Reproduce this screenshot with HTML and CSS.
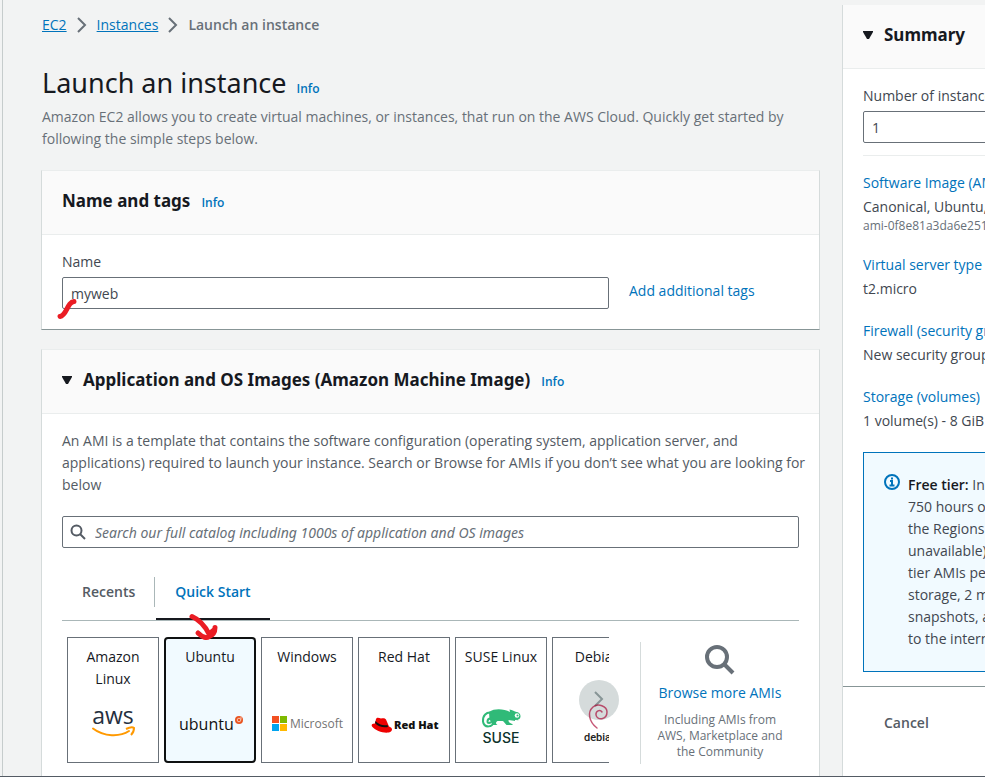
FILE: index.html
```html
<!DOCTYPE html>
<html lang="en">
<head>
<meta charset="utf-8">
<title>Launch an instance</title>
<link rel="stylesheet" href="styles.css">
</head>
<body>
<div class="shell">
  <main class="main">
    <nav class="crumbs" aria-label="Breadcrumbs">
      <a href="#">EC2</a>
      <svg class="chev" viewBox="0 0 10 16"><path d="M1 1l7 7-7 7"/></svg>
      <a href="#">Instances</a>
      <svg class="chev" viewBox="0 0 10 16"><path d="M1 1l7 7-7 7"/></svg>
      <span class="here">Launch an instance</span>
    </nav>
    <div class="title"><h1>Launch an instance</h1><a class="info" href="#">Info</a></div>
    <p class="lead">Amazon EC2 allows you to create virtual machines, or instances, that run on the AWS Cloud. Quickly get started by<br>following the simple steps below.</p>

    <section class="card">
      <header class="card-head"><h2>Name and tags</h2><a class="info" href="#">Info</a></header>
      <div class="card-body">
        <label class="label" for="name">Name</label>
        <div class="name-row">
          <div class="name-field">
            <input class="field" id="name" type="text" value="myweb">
            <svg class="mark-name" viewBox="0 0 22 22"><path d="M4 18.500C11 17.500 11 4 18 3.500"/></svg>
          </div>
          <a class="link" href="#">Add additional tags</a>
        </div>
      </div>
    </section>

    <section class="card card-open">
      <header class="card-head"><svg class="tri" viewBox="0 0 10 8"><path d="M0 0h10v1L6 8H4L0 1z"/></svg><h2>Application and OS Images (Amazon Machine Image)</h2><a class="info" href="#">Info</a></header>
      <div class="card-body">
        <p class="text">An AMI is a template that contains the software configuration (operating system, application server, and<br>applications) required to launch your instance. Search or Browse for AMIs if you don’t see what you are looking for<br>below</p>
        <div class="search">
          <svg class="search-icon" viewBox="0 0 16 16"><circle cx="6.500" cy="6.500" r="5"/><path d="M10 10l5 5"/></svg>
          <input class="field search-field" type="search" aria-label="Search AMIs" placeholder="Search our full catalog including 1000s of application and OS images">
        </div>
        <div class="tabs" role="tablist">
          <button class="tab" role="tab" type="button">Recents</button>
          <button class="tab tab-on" role="tab" type="button" aria-selected="true">Quick Start</button>
          <svg class="mark-tab" viewBox="0 0 32 30"><path d="M4 3.500C12 7 17 13 21 21M10 20C15 25 19 25 20.500 24C26 22 27 19 27 14.500M21 21L26 17"/></svg>
        </div>
        <div class="picker">
          <div class="carousel">
            <button class="next" type="button" aria-label="Next"><svg class="next-icon" viewBox="0 0 10 16"><path d="M1 1l7 7-7 7"/></svg></button>
            <div class="tiles">
              <label class="tile"><input type="radio" name="os"><span>Amazon Linux</span>
                <svg class="logo" viewBox="0 0 90 60"><text class="aws" x="45" y="27" text-anchor="middle">aws</text><path class="smile" d="M25 31.500C36 40 52 40 61 34"/><path class="smile-tip" d="M58 32c4-2 7-2 8-1 0 3-1 5-3 7"/></svg></label>
              <label class="tile tile-on"><input type="radio" name="os" checked><span>Ubuntu</span>
                <svg class="logo" viewBox="0 0 90 60"><text class="ubuntu" x="14" y="33">ubuntu</text><circle cx="74" cy="23" r="4" fill="#e95420"/><circle class="ring" cx="74" cy="23" r="1.800"/><path class="ring" d="M76 19.500v3"/></svg></label>
              <label class="tile"><input type="radio" name="os"><span>Windows</span>
                <svg class="logo" viewBox="0 0 90 60"><path fill="#f25022" d="M10 19h7v7h-7z"/><path fill="#7fba00" d="M18 19h7v7h-7z"/><path fill="#00a4ef" d="M10 27h7v7h-7z"/><path fill="#ffb900" d="M18 27h7v7h-7z"/><text class="ms" x="28" y="31">Microsoft</text></svg></label>
              <label class="tile"><input type="radio" name="os"><span>Red Hat</span>
                <svg class="logo" viewBox="0 0 90 60"><path fill="#e00" d="M17 22c1-2 3-1 5-.500 2-.500 4-.500 5 1l3 7c3 1 4 3 2 5-4 3-15 0-19-5-1-2 0-3 3-3z"/><path d="M16 26c3 4 9 5 13 4l-.500-2c-4 1-9-.500-12-4z"/><text class="rh" x="35" y="32">Red Hat</text></svg></label>
              <label class="tile"><input type="radio" name="os"><span>SUSE Linux</span>
                <svg class="logo" viewBox="0 0 90 60"><path fill="#30ba78" d="M33 15c6-4 15-3 21 0l-.500-2.500c3 .500 5 2 7 2.500 2 0 4 2 4 4 0 3-2 5-5 5l-7-1c0 3 2 3 4 4v1h-6c-2-2-3-4-4-4h-5c-2 1-2 3 0 4h-5c-2-3-2-5-3-5z"/><path class="tail" d="M37 16C30 14 26.500 19 27 24.500c1 7 10.500 6 10.500 0 0-4-6-4-6 0 0 2 3 2 3 0"/><circle cx="61" cy="18.500" r="2.300" fill="#fff"/><circle cx="61.500" cy="18.500" r="1" fill="#30ba78"/><path class="mouth" d="M59 23.500q3 .500 5-1.500"/><text class="suse" x="45" y="46" text-anchor="middle">SUSE</text></svg></label>
              <label class="tile"><input type="radio" name="os"><span>Debian</span>
                <svg class="logo" viewBox="0 0 90 60"><path class="swirl" d="M44 31C36 25 34 15 40 10c5-4 14-1 14 5 0 8-10 9-11 3-.500-4 4-6 6-3"/><text class="deb" x="31" y="44">debian</text></svg></label>
            </div>
          </div>
          <div class="more">
            <svg class="more-icon" viewBox="0 0 30 30"><circle cx="12" cy="12" r="10"/><path d="M19 19l9 9"/></svg>
            <a class="link" href="#">Browse more AMIs</a>
            <p class="hint">Including AMIs from<br>AWS, Marketplace and<br>the Community</p>
          </div>
        </div>
      </div>
    </section>
  </main>

  <aside class="side">
    <div class="side-inner">
      <header class="card-head"><svg class="tri" viewBox="0 0 10 8"><path d="M0 0h10v1L6 8H4L0 1z"/></svg><h2>Summary</h2></header>
      <div class="side-body">
        <label class="label" for="count">Number of instances</label>
        <input class="field" id="count" type="text" value="1">
        <dl class="facts">
          <div><dt><a class="link" href="#">Software Image (AMI)</a></dt><dd>Canonical, Ubuntu,</dd><dd class="small">ami-0f8e81a3da6e2510</dd></div>
          <div><dt><a class="link" href="#">Virtual server type (instance type)</a></dt><dd>t2.micro</dd></div>
          <div><dt><a class="link" href="#">Firewall (security group)</a></dt><dd>New security group</dd></div>
          <div><dt><a class="link" href="#">Storage (volumes)</a></dt><dd>1 volume(s) - 8 GiB</dd></div>
        </dl>
        <div class="tier">
          <svg class="tier-icon" viewBox="0 0 16 16"><circle cx="8" cy="8" r="7"/><path d="M6 7h2v4.500M5.500 11.500h5M7 4.500h2"/></svg>
          <p><b>Free tier:</b> In<br>750 hours of<br>the Regions<br>unavailable)<br>tier AMIs per<br>storage, 2 million<br>snapshots, and<br>to the internet.</p>
        </div>
      </div>
      <footer class="side-foot"><button class="cancel" type="button">Cancel</button></footer>
    </div>
  </aside>
</div>
</body>
</html>
```
FILE: styles.css
```css
* { box-sizing: border-box; }
body {
  margin: 0;
  background: #f2f3f3;
  color: #414750;
  font: 14px/22px "Open Sans", "Noto Sans", sans-serif;
}
h1, h2, p, dl, dd { margin: 0; }
h1 { font: 400 27px/36px "Noto Sans", sans-serif; color: #16191f; }
h2 { font: 700 17px/26px "Noto Sans", sans-serif; color: #16191f; }
button, input { font: inherit; }
svg { flex: none; fill: none; }
a, .link { color: #0073bb; text-decoration: none; }

.shell {
  display: grid;
  grid-template-columns: minmax(0, 1fr) 143px;
  gap: 22px;
  height: 100vh;
  overflow: hidden;
  border-bottom: 1px solid #545b64;
}
.main {
  display: flex;
  flex-direction: column;
  margin-left: 2px;
  padding: 14px 0 0 38px;
  border-left: 1px solid #c6cccc;
}
.crumbs { display: flex; align-items: center; gap: 10px; }
.crumbs a { text-decoration: underline; }
.chev { width: 10px; height: 16px; stroke: #687078; stroke-width: 2; }
.here { color: #687078; font-weight: 600; }
.title { display: flex; align-items: baseline; gap: 10px; margin: 29px 0 5px; }
.info { font-size: 12px; line-height: 16px; font-weight: 600; }
.lead { color: #687078; white-space: nowrap; }
.crumbs, .title, .lead { margin-left: 1px; }

.card {
  margin-top: 20px;
  background: #fff;
  border: 1px solid #d5dbdb;
  border-top-color: #eaeded;
  border-bottom-color: #879596;
}
.card-open { flex: 1; border-bottom: 0; margin-top: 19px; }
.card-head {
  display: flex;
  align-items: baseline;
  gap: 11px;
  height: 64px;
  padding: 17px 20px 0;
  background: #fafafa;
  border-bottom: 1px solid #eaeded;
}
.tri { width: 10px; height: 8px; fill: #16191f; align-self: center; margin-bottom: 20px; }
.card-body { padding: 16px 20px 20px; }
.label { display: block; margin-bottom: 4px; }
.field {
  display: block;
  width: 100%;
  height: 32px;
  padding: 0 8px;
  border: 1px solid #687078;
  border-radius: 2px;
  background: #fff;
  color: #414750;
}
.name-row { display: grid; grid-template-columns: minmax(0, 1fr) 170px; gap: 20px; line-height: 28px; }
.name-field { position: relative; }
.mark-name { position: absolute; left: -6px; top: 21px; width: 22px; height: 22px; stroke: #ea1c24; stroke-width: 5; stroke-linecap: round; }

.text { color: #545b64; white-space: nowrap; }
.search { position: relative; margin-top: 20px; }
.search-icon { position: absolute; left: 8px; top: 8px; width: 16px; height: 16px; stroke: #545b64; stroke-width: 2; }
.search-field { padding-left: 32px; font-family: "Noto Sans", sans-serif; }
.search-field::placeholder { color: #687078; font-style: italic; opacity: 1; }

.tabs { position: relative; display: flex; margin-top: 20px; height: 53px; border-bottom: 1px solid #aab7b8; }
.tab {
  position: relative;
  padding: 0 19px 2px;
  margin-right: 1px;
  border: 0;
  border-bottom: 2px solid transparent;
  background: none;
  color: #545b64;
  font-weight: 600;
}
.tab:first-child { border-right: 1px solid #aab7b8; border-bottom: 0; height: 30px; margin-top: 9px; padding: 0 19px 0 20px; }
.tab-on { color: #0073bb; border-bottom-color: #16191f; }
.mark-tab { position: absolute; left: 126px; top: 45px; width: 32px; height: 30px; stroke: #ea1c24; stroke-width: 5; stroke-linecap: round; stroke-linejoin: round; z-index: 2; }

.picker { display: grid; grid-template-columns: minmax(0, 1fr) 159px; gap: 31px; margin-top: 16px; }
.carousel { position: relative; padding-left: 5px; }
.tiles { position: relative; display: flex; gap: 5px; overflow: hidden; }
.tile {
  flex: none;
  display: flex;
  flex-direction: column;
  justify-content: space-between;
  width: 92px;
  height: 126px;
  padding-top: 8px;
  border: 1px solid #687078;
  color: #16191f;
  text-align: center;
}
.tile span { padding: 0 8px; }
.tile:nth-child(5) span { padding: 0; }
.tile input { position: absolute; opacity: 0; }
.tile-on { background: #f1faff; border: 2px solid #0f1111; border-radius: 4px; padding-top: 7px; }
.logo { display: block; width: 90px; height: 60px; margin-bottom: 5px; }
.tile-on .logo { margin: 0 0 4px -1px; }
.aws { font: 500 23px "Open Sans", sans-serif; fill: #252f3e; }
.smile { stroke: #f90; stroke-width: 2; stroke-linecap: round; }
.smile-tip { stroke: #f90; stroke-width: 2; }
.ubuntu { font: 500 16px "Open Sans", sans-serif; fill: #111; }
.ring { fill: none; stroke: #f7c5b4; stroke-width: 1; }
.mouth { stroke: #fff; }
.ms { font: 500 12px "Open Sans", sans-serif; fill: #737373; }
.rh { font: 800 11px "Open Sans", sans-serif; fill: #111; }
.logo path:not([fill]):not([class]) { fill: #111; }
.suse { font: 500 14px Inter, sans-serif; fill: #0c322c; }
.tail { stroke: #30ba78; stroke-width: 2; }
.swirl { stroke: #a80030; stroke-opacity: .65; stroke-width: 1.5; stroke-linecap: round; }
.deb { font: 500 11px Roboto, sans-serif; fill: #222; }
.next {
  position: absolute;
  right: -10px;
  top: 43px;
  width: 40px;
  height: 40px;
  padding: 0;
  border: 0;
  border-radius: 50%;
  background: #d5dbdb;
}
.next-icon { display: block; width: 10px; height: 16px; margin: -3px auto 0; stroke: #879596; stroke-width: 2; }
.more { display: flex; flex-direction: column; align-items: center; margin-top: 5px; height: 122px; border-left: 1px solid #d5dbdb; white-space: nowrap; }
.more-icon { width: 30px; height: 30px; margin: 3px 0 7px; stroke: #687078; stroke-width: 4; }
.hint { margin-top: 8px; font-size: 12px; line-height: 16px; color: #687078; text-align: center; }

.side { padding-top: 5px; overflow: hidden; }
.side-inner { width: 300px; min-height: 100%; background: #fff; border-left: 1px solid #d5dbdb; white-space: nowrap; }
.side-body { padding: 16px 20px 14px; border-bottom: 1px solid #879596; }
.facts { margin: 12px 0 20px; padding-top: 16px; border-top: 1px solid #eaeded; display: grid; gap: 20px; }
.facts dt { margin-bottom: 2px; }
.small { font-size: 12px; line-height: 16px; color: #687078; }
.tier { display: flex; gap: 8px; padding: 21px 20px; border: 1px solid #0073bb; background: #f1faff; }
.tier-icon { width: 16px; height: 16px; stroke: #0073bb; stroke-width: 2; }
.tier b { color: #16191f; font-weight: 600; }
.side-foot { padding: 25px 20px; }
.cancel { padding: 0 21px; border: 0; background: none; color: #545b64; font-weight: 600; }
```
